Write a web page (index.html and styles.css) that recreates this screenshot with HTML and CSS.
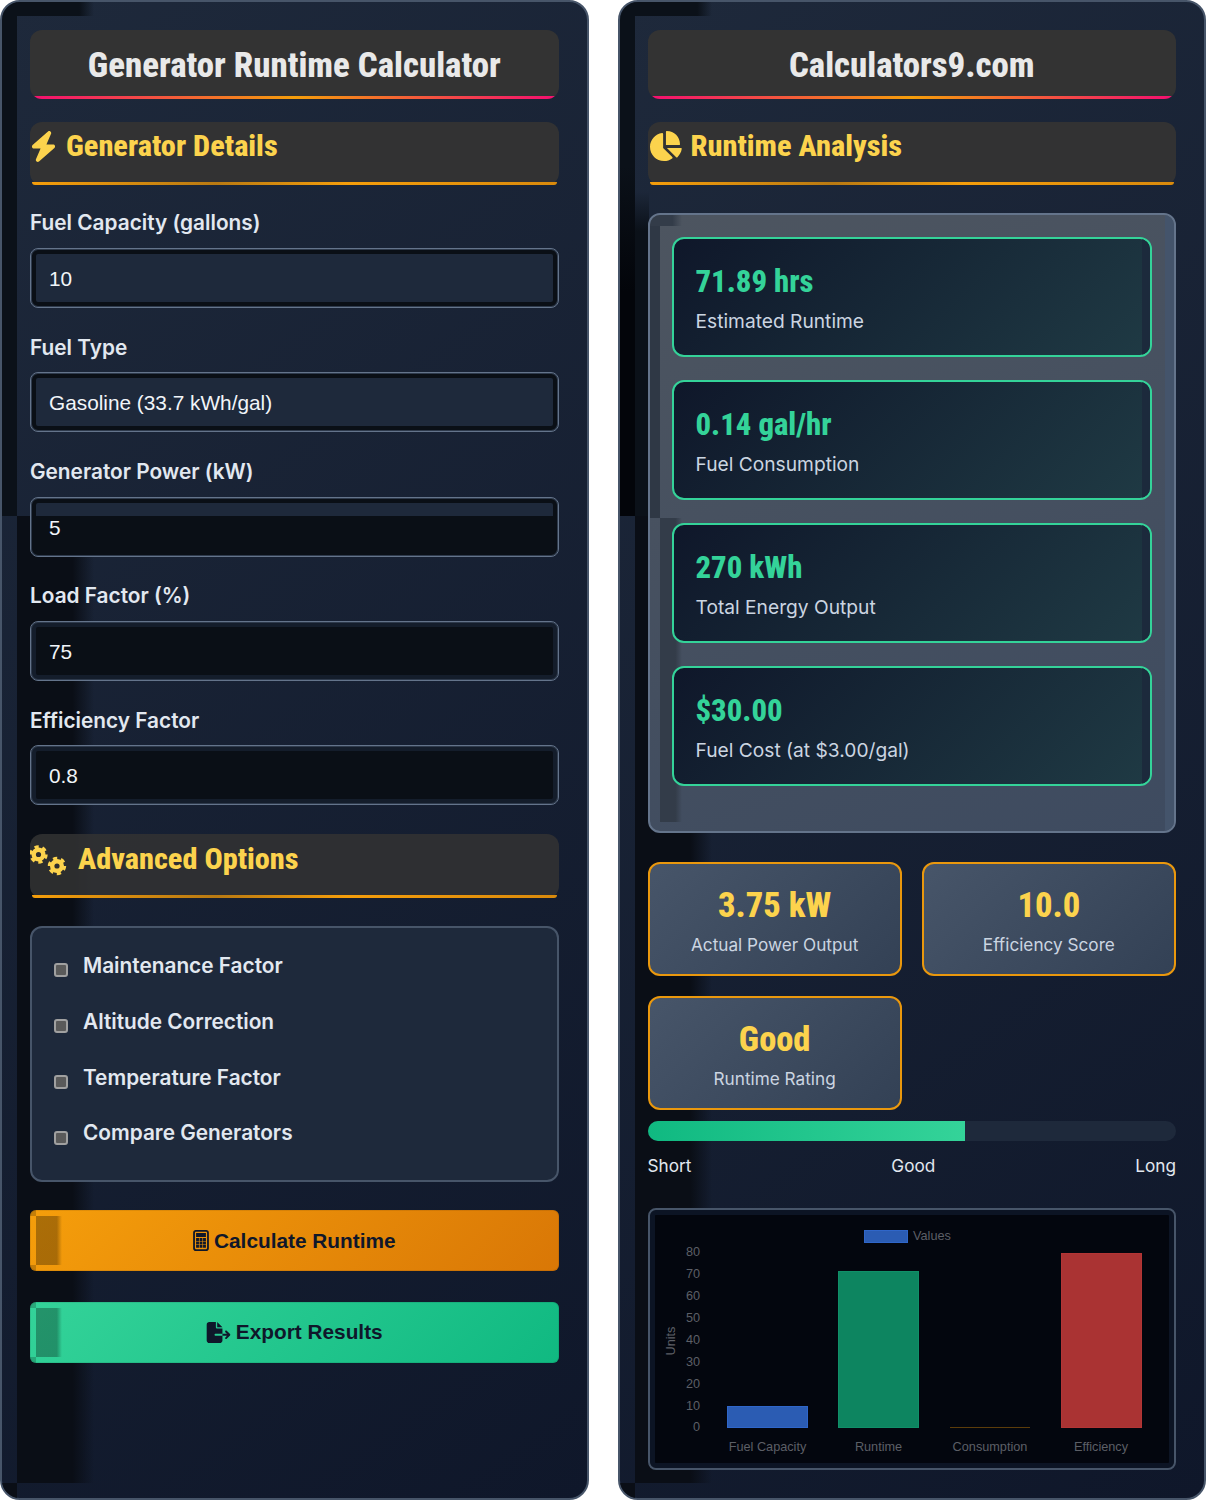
FILE: index.html
```html
<!DOCTYPE html>
<html lang="en">
<head>
    <meta charset="UTF-8">
    <title>Generator Runtime Calculator</title>
    <link rel="stylesheet" href="styles.css">
</head>
<body>
    <div class="calculator">
        <section class="panel">
            <h1 class="panel-title">Generator Runtime Calculator</h1>
            <h2 class="section-title">
                <svg class="icon icon-bolt" viewBox="0 0 448 512"><path d="M349.4 44.6c5.9-13.7 1.5-29.7-10.6-38.5s-28.6-8-39.9 1.8l-256 224c-10 8.8-13.6 22.9-8.9 35.3S50.7 288 64 288H175.5L98.6 467.4c-5.900 13.700-1.500 29.700 10.600 38.500s28.600 8 39.900-1.800l256-224c10-8.800 13.600-22.900 8.900-35.300s-16.600-20.700-30-20.700H272.500L349.400 44.600z"/></svg>
                Generator Details
            </h2>

            <div class="form-group">
                <label>Fuel Capacity (gallons)</label>
                <input class="field" type="text" value="10">
            </div>
            <div class="form-group">
                <label>Fuel Type</label>
                <input class="field" type="text" value="Gasoline (33.7 kWh/gal)">
            </div>
            <div class="form-group">
                <label>Generator Power (kW)</label>
                <input class="field field-split" type="text" value="5">
            </div>
            <div class="form-group">
                <label>Load Factor (%)</label>
                <input class="field field-dark" type="text" value="75">
            </div>
            <div class="form-group">
                <label>Efficiency Factor</label>
                <input class="field field-dark" type="text" value="0.8">
            </div>

            <h2 class="section-title section-advanced">
                <svg class="icon icon-gears" viewBox="0 0 37 32">
                    <g class="gear" transform="translate(8.500 10.500)"><circle r="4.800"/><circle class="teeth" r="7.600" pathLength="32"/></g>
                    <g class="gear" transform="translate(27 22)"><circle r="4.800"/><circle class="teeth" r="7.600" pathLength="32"/></g>
                </svg>
                Advanced Options
            </h2>

            <div class="options">
                <label class="option"><input type="checkbox">Maintenance Factor</label>
                <label class="option"><input type="checkbox">Altitude Correction</label>
                <label class="option"><input type="checkbox">Temperature Factor</label>
                <label class="option"><input type="checkbox">Compare Generators</label>
            </div>

            <button class="action action-calc">
                <svg class="btn-icon" viewBox="0 0 384 512"><path fill-rule="evenodd" d="M64 0C28.700 0 0 28.700 0 64V448c0 35.300 28.700 64 64 64H320c35.300 0 64-28.700 64-64V64c0-35.300-28.700-64-64-64H64zM74 44H310c16.600 0 30 13.400 30 30V438c0 16.600-13.400 30-30 30H74c-16.600 0-30-13.400-30-30V74c0-16.600 13.400-30 30-30zM72 72V170H312V72H72zM72 196v70h70V196H72zm85 0v70h70V196H157zm85 0v70h70V196H242zM72 278v70h70V278H72zm85 0v70h70V278H157zm85 0v70h70V278H242zM72 360v70h70V360H72zm85 0v70h70V360H157zm85 0v70h70V360H242z"/></svg>
                Calculate Runtime
            </button>
            <button class="action action-export">
                <svg class="btn-icon btn-icon-wide" viewBox="0 0 576 512"><path d="M0 64C0 28.700 28.700 0 64 0H224V128c0 17.700 14.300 32 32 32H384V288H216c-13.300 0-24 10.700-24 24s10.700 24 24 24H384V448c0 35.300-28.700 64-64 64H64c-35.300 0-64-28.700-64-64V64zM384 336V288H494.100l-39-39c-9.400-9.400-9.400-24.600 0-33.900s24.600-9.400 33.900 0l80 80c9.400 9.400 9.400 24.600 0 33.900l-80 80c-9.400 9.400-24.600 9.400-33.900 0s-9.400-24.600 0-33.900l39-39H384zm0-208H256V0L384 128z"/></svg>
                Export Results
            </button>
        </section>

        <section class="panel panel-analysis">
            <h1 class="panel-title">Calculators9.com</h1>
            <h2 class="section-title">
                <svg class="icon icon-pie" viewBox="0 0 576 512"><path d="M304 240V16.600c0-9 7-16.600 16-16.600C443.700 0 544 100.300 544 224c0 9-7.600 16-16.600 16H304zM32 272C32 150.700 122.100 50.300 239 34.300c9.200-1.300 17 6.100 17 15.400V288L412.500 444.500c6.700 6.700 6.200 17.700-1.500 23.100C371.800 495.600 323.800 512 272 512C139.500 512 32 404.600 32 272zm526.400 16c9.300 0 16.600 7.800 15.400 17c-7.700 55.900-34.600 105.600-73.900 142.300c-6 5.600-15.400 5.200-21.200-.7L320 288H558.400z"/></svg>
                Runtime Analysis
            </h2>

            <div class="results">
                <div class="result-card">
                    <div class="result-value">71.89 hrs</div>
                    <div class="result-label">Estimated Runtime</div>
                </div>
                <div class="result-card">
                    <div class="result-value">0.14 gal/hr</div>
                    <div class="result-label">Fuel Consumption</div>
                </div>
                <div class="result-card">
                    <div class="result-value">270 kWh</div>
                    <div class="result-label">Total Energy Output</div>
                </div>
                <div class="result-card">
                    <div class="result-value">$30.00</div>
                    <div class="result-label">Fuel Cost (at $3.00/gal)</div>
                </div>
            </div>

            <div class="stats">
                <div class="stat">
                    <div class="stat-value">3.75 kW</div>
                    <div class="stat-label">Actual Power Output</div>
                </div>
                <div class="stat">
                    <div class="stat-value">10.0</div>
                    <div class="stat-label">Efficiency Score</div>
                </div>
                <div class="stat">
                    <div class="stat-value">Good</div>
                    <div class="stat-label">Runtime Rating</div>
                </div>
            </div>

            <div class="meter"><div class="meter-fill" style="width: 60%"></div></div>
            <div class="meter-labels">
                <span>Short</span>
                <span>Good</span>
                <span>Long</span>
            </div>

            <div class="chart">
                <svg class="chart-svg" width="524" height="258" viewBox="0 0 524 258">
                    <rect x="214.500" y="20.500" width="43" height="12" fill="#2b5cb3" stroke="#2f66c9"/>
                    <text class="tick" x="263" y="30">Values</text>

                    <g class="tick tick-y">
                        <text x="50" y="46">80</text>
                        <text x="50" y="68">70</text>
                        <text x="50" y="90">60</text>
                        <text x="50" y="112">50</text>
                        <text x="50" y="134">40</text>
                        <text x="50" y="156">30</text>
                        <text x="50" y="178">20</text>
                        <text x="50" y="200">10</text>
                        <text x="50" y="221">0</text>
                    </g>
                    <text class="tick tick-mid" transform="translate(25 131) rotate(-90)">Units</text>

                    <rect x="77.500" y="196.500" width="80" height="21" fill="#2b5cb3" stroke="#2f66c9"/>
                    <rect x="188.500" y="61.500" width="80" height="156" fill="#0d8560" stroke="#108f68"/>
                    <rect x="300" y="217" width="80" height="1" fill="#5c3c0a"/>
                    <rect x="411.500" y="43.500" width="80" height="174" fill="#aa3333" stroke="#b33535"/>

                    <g class="tick tick-mid">
                        <text x="117.500" y="241">Fuel Capacity</text>
                        <text x="228.500" y="241">Runtime</text>
                        <text x="340" y="241">Consumption</text>
                        <text x="451" y="241">Efficiency</text>
                    </g>
                </svg>
            </div>
        </section>
    </div>
</body>
</html>
```

FILE: styles.css
```css
* {
    box-sizing: border-box;
}

body {
    margin: 0;
    background: #fff;
    font-family: 'Inter', 'Liberation Sans', sans-serif;
    color: #e2e8f0;
}

.calculator {
    display: grid;
    grid-template-columns: 588.5px 588.5px;
    gap: 29px;
    height: 1500px;
}

.panel {
    position: relative;
    height: 1500px;
    padding: 28px;
    border: 2px solid #475569;
    border-radius: 20px;
    background: linear-gradient(145deg, #1e293b 0%, #0f172a 100%);
    overflow: hidden;
}

/* dark bands that sit on the panel background, behind the content */
.panel::before {
    content: '';
    position: absolute;
    top: 0;
    left: 0;
    width: 92px;
    height: 1500px;
    background:
        linear-gradient(90deg, #0b1119 0, #0b1119 84%, transparent 100%) 0 0 / 92px 14px no-repeat,
        linear-gradient(#0b1119, #0b1119) 0 14px / 15px 500px no-repeat,
        linear-gradient(90deg, #0a0e16 0, #0a0e16 72%, transparent 100%) 15px 514px / 77px 967px no-repeat,
        linear-gradient(#0a0e16, #0a0e16) 0 1481px / 15px 19px no-repeat;
}

.panel-analysis::before {
    background:
        linear-gradient(90deg, #0b1119 0, #0b1119 84%, transparent 100%) 0 0 / 92px 14px no-repeat,
        linear-gradient(#0b1119 0, #0b1119 30%, #03050a 55%, #03050a 100%) 0 14px / 15px 500px no-repeat,
        linear-gradient(transparent 0, #0b1119 12%, #0b1119 100%) 15px 190px / 14px 324px no-repeat,
        linear-gradient(90deg, #0a0e16 0, #0a0e16 72%, transparent 100%) 15px 514px / 77px 967px no-repeat,
        linear-gradient(#0a0e16, #0a0e16) 0 1481px / 15px 19px no-repeat;
}

.panel > * {
    position: relative;
}

.panel-title {
    margin: 0 0 23px;
    height: 68.600px;
    border-radius: 12px;
    background: #333;
    font-family: 'Roboto', 'Liberation Sans', sans-serif;
    font-stretch: 75%;
    font-size: 34.800px;
    font-weight: 800;
    line-height: 70px;
    text-align: center;
    color: #e9e9e9;
    overflow: hidden;
}

.panel-title::after,
.section-title::after {
    content: '';
    position: absolute;
    left: 2px;
    right: 2px;
    bottom: 0;
    height: 3px;
    border-radius: 0 0 10px 10px;
    background: linear-gradient(90deg, #f50f70, #f59e0b, #f50f70);
}

.section-title {
    display: flex;
    align-items: flex-start;
    gap: 9px;
    margin: 0 0 21.500px;
    height: 63.400px;
    padding-top: 5px;
    border-radius: 12px;
    background: rgba(51, 51, 51, 0.96);
    font-family: 'Roboto', 'Liberation Sans', sans-serif;
    font-stretch: 75%;
    font-size: 30.300px;
    font-weight: 800;
    line-height: 38px;
    color: #fcd34d;
}

.section-title::after {
    background: linear-gradient(90deg, #f59e0b, #b97a12 35%, #f59e0b 60%, #d98a0c);
}

.section-advanced {
    margin-top: 29px;
    margin-bottom: 28px;
    padding-top: 6px;
    background: rgba(51, 51, 51, 0.85);
}

.icon {
    flex: none;
    fill: #fcd34d;
}

.icon-bolt {
    width: 27px;
    height: 31px;
    margin-top: 4px;
}

.icon-pie {
    width: 34px;
    height: 30px;
    margin-top: 4px;
}

.icon-gears {
    width: 37px;
    height: 32px;
    margin-top: 4px;
    margin-right: 2px;
}

.gear circle {
    fill: none;
    stroke: #fcd34d;
    stroke-width: 4.400;
}

.gear .teeth {
    stroke-width: 3.200;
    stroke-dasharray: 2.800 2.533;
}

.form-group {
    margin-bottom: 22.800px;
}

.form-group label {
    display: block;
    margin-bottom: 8.500px;
    font-size: 20.800px;
    font-weight: 600;
    line-height: 33px;
    color: #e2e8f0;
}

.field {
    display: block;
    width: 100%;
    height: 60px;
    padding: 2px 18px 0;
    border: 1px solid #64748b;
    border-radius: 8px;
    outline: none;
    background: #1e293b;
    box-shadow: inset 0 0 0 1px #2e3a4c, inset 0 0 0 5px #0a0f16;
    font-family: 'Liberation Sans', sans-serif;
    font-size: 20.800px;
    color: #f1f5f9;
}

.field-dark {
    background: #0a0f16;
    box-shadow: inset 0 0 0 1px #2e3a4c, inset 0 0 0 5px #141d2b;
}

.field-split {
    background: linear-gradient(#1e293b 0, #1e293b 18px, #0a0f16 18px);
}

.options {
    display: flex;
    flex-direction: column;
    height: 256px;
    margin-bottom: 28.500px;
    padding: 11px 22px;
    border: 2px solid #475569;
    border-radius: 12px;
    background: #1e293b;
}

.option {
    display: flex;
    align-items: center;
    gap: 15px;
    height: 55.800px;
    padding-bottom: 2px;
    font-size: 20.800px;
    font-weight: 600;
    color: #e2e8f0;
}

.option input {
    appearance: none;
    flex: none;
    width: 14px;
    height: 14px;
    margin: 10px 0 0;
    border: 2px solid #a0a0a0;
    border-radius: 3px;
    background: #5a5a5a;
}

.action {
    display: flex;
    align-items: center;
    justify-content: center;
    gap: 5px;
    width: 100%;
    height: 61px;
    margin-bottom: 30.500px;
    border: 0;
    border-radius: 6px;
    box-shadow: inset 0 0 0 1px rgba(0, 0, 0, 0.08);
    font-family: 'Liberation Sans', sans-serif;
    font-size: 20.800px;
    font-weight: 700;
    color: #0f172a;
    overflow: hidden;
}

.action::before {
    content: '';
    position: absolute;
    top: 0;
    bottom: 0;
    left: 0;
    width: 32px;
    background:
        linear-gradient(90deg, rgba(0,0,0,0.3) 0, rgba(0,0,0,0.3) 80%, transparent 100%) 6px 6px / 26px 49px no-repeat,
        linear-gradient(rgba(0,0,0,0.2), rgba(0,0,0,0.2)) 0 0 / 6px 6px no-repeat,
        linear-gradient(rgba(0,0,0,0.2), rgba(0,0,0,0.2)) 0 55px / 6px 6px no-repeat;
}

.action-calc {
    background: linear-gradient(135deg, #f59e0b, #d97706);
}

.action-export {
    background: linear-gradient(135deg, #34d399, #10b981);
}

.btn-icon {
    flex: none;
    width: 16px;
    height: 21px;
    fill: #0f172a;
}

.btn-icon-wide {
    width: 25px;
}

.results {
    height: 620px;
    margin-top: 28px;
    margin-bottom: 29px;
    padding: 22px;
    border: 2px solid #64748b;
    border-radius: 12px;
    background: linear-gradient(160deg, #4d5560, #3e4b60);
    overflow: hidden;
}

.results::before {
    content: '';
    position: absolute;
    top: 0;
    left: 0;
    width: 32px;
    height: 620px;
    background:
        linear-gradient(90deg, #333c49 0, #333c49 70%, transparent 100%) 0 0 / 32px 11px no-repeat,
        linear-gradient(#2f3845, #2f3845) 0 11px / 10px 292px no-repeat,
        linear-gradient(90deg, #333c49 0, #333c49 70%, transparent 100%) 10px 303px / 22px 304px no-repeat;
}

.results::after {
    content: '';
    position: absolute;
    top: 0;
    bottom: 0;
    right: 0;
    width: 9px;
    background: #44546b;
}

.result-card {
    position: relative;
    height: 120px;
    margin-bottom: 23px;
    padding: 23px 22px 0;
    border: 2px solid #34d399;
    border-radius: 12px;
    background: linear-gradient(135deg, #0f172a, #1f3a44);
    overflow: hidden;
}

.result-card::after {
    content: '';
    position: absolute;
    top: 0;
    bottom: 0;
    right: 0;
    width: 8px;
    background: #1c2a3c;
}

.result-value {
    font-family: 'Roboto', 'Liberation Sans', sans-serif;
    font-stretch: 75%;
    font-size: 30.700px;
    font-weight: 800;
    line-height: 40px;
    color: #34d399;
}

.result-label {
    margin-top: 6px;
    font-size: 19.200px;
    line-height: 26px;
    color: #cbd5e1;
}

.stats {
    display: grid;
    grid-template-columns: 1fr 1fr;
    gap: 20px;
    margin-bottom: 11px;
}

.stat {
    height: 114px;
    padding-top: 20px;
    border: 2px solid #ea980d;
    border-radius: 12px;
    background: linear-gradient(135deg, #475569, #334155);
    text-align: center;
}

.stat-value {
    font-family: 'Roboto', 'Liberation Sans', sans-serif;
    font-stretch: 75%;
    font-size: 34.500px;
    font-weight: 800;
    line-height: 42px;
    color: #fcd34d;
}

.stat-label {
    margin-top: 7px;
    font-size: 17.200px;
    line-height: 24px;
    color: #cbd5e1;
}

.meter {
    height: 20px;
    border-radius: 10px;
    background: #1e293b;
    overflow: hidden;
}

.meter-fill {
    height: 100%;
    background: linear-gradient(90deg, #10b981, #34d399);
}

.meter-labels {
    display: flex;
    justify-content: space-between;
    margin-top: 13px;
    margin-bottom: 30px;
    font-size: 17.200px;
    line-height: 24px;
    color: #e2e8f0;
}

.chart {
    height: 262px;
    border: 2px solid #475569;
    border-radius: 8px;
    background: #03060e;
    box-shadow: inset 0 0 0 5px #0c1424;
}

.chart-svg {
    display: block;
}

.tick {
    font-family: 'Liberation Sans', sans-serif;
    font-size: 12.700px;
    fill: #5c5f66;
}

.tick-y {
    text-anchor: end;
}

.tick-mid {
    text-anchor: middle;
}
```
